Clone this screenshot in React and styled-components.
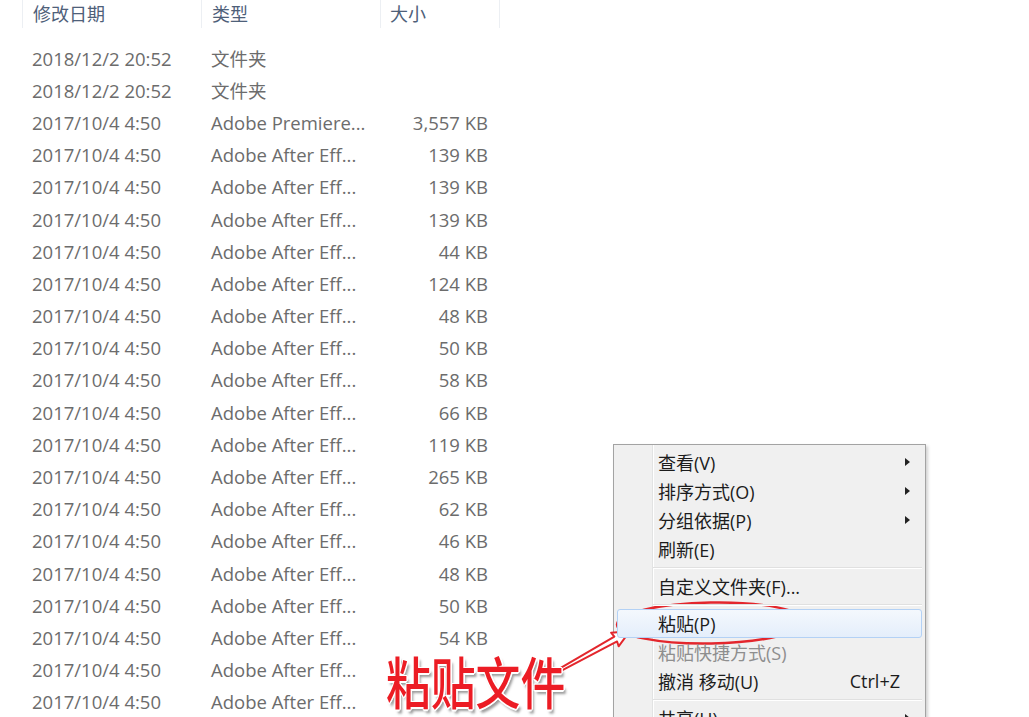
import styled, { createGlobalStyle } from "styled-components";

const Global = createGlobalStyle`
  html, body {
    margin: 0;
    padding: 0;
    background: #fff;
    overflow: hidden;
  }
  body {
    font-family: "Open Sans", "Noto Sans CJK SC", sans-serif;
  }
`;

const Page = styled.div`
  position: relative;
  width: 1029px;
  height: 717px;
  overflow: hidden;
  background: #fff;
`;

const Columns = styled.div`
  display: grid;
  grid-template-columns: 179px 179px 120px;
  margin-left: 22px;
`;

const Header = styled(Columns)`
  height: 28px;
  align-items: center;
`;

const HeadCell = styled.div`
  height: 100%;
  display: flex;
  align-items: center;
  padding-left: ${(p) => p.$pad || 10}px;
  border-left: 1px solid #eceff3;
  border-right: ${(p) => (p.$last ? "1px solid #eceff3" : "none")};
  font-size: 18px;
  color: #4e6079;
  line-height: 1;
  box-sizing: border-box;
`;

const List = styled.div`
  padding-top: 14px;
`;

const Row = styled(Columns)`
  height: 32.2px;
  align-items: center;
  font-size: 18.5px;
  color: #6c6c6c;
  white-space: nowrap;
`;

const Cell = styled.div`
  padding-left: ${(p) => (p.$right ? 0 : 10)}px;
  padding-right: ${(p) => (p.$right ? 12 : 0)}px;
  text-align: ${(p) => (p.$right ? "right" : "left")};
  overflow: hidden;
`;

const Menu = styled.div`
  position: absolute;
  left: 613px;
  top: 444px;
  width: 313px;
  height: 320px;
  box-sizing: border-box;
  border: 1px solid #a3a3a3;
  background: #f0f0f0;
  padding: 3px 3px;
  box-shadow: 2px 2px 3px rgba(0, 0, 0, 0.18);
  font-family: "Open Sans", "Noto Sans CJK SC", sans-serif;
  font-size: 18px;
  color: #1c1c1c;

  &::before {
    content: "";
    position: absolute;
    top: 0;
    bottom: 0;
    left: 38px;
    width: 1px;
    background: #e2e3e3;
    border-right: 1px solid #fff;
  }
`;

const Item = styled.div`
  position: relative;
  z-index: 1;
  height: 29px;
  box-sizing: border-box;
  display: flex;
  align-items: center;
  padding: 0 9px 2px 40px;
  color: ${(p) => (p.$disabled ? "#8e8e8e" : "#1c1c1c")};
  border: 1px solid ${(p) => (p.$active ? "#b3d1f5" : "transparent")};
  border-radius: 3px;
  background: ${(p) =>
    p.$active ? "linear-gradient(#f4f8fd, #e4eefb)" : "transparent"};
  white-space: nowrap;
`;

const Label = styled.span`
  flex: 1;
`;

const Shortcut = styled.span`
  margin-right: 12px;
`;

const SubArrow = styled.span`
  width: 0;
  height: 0;
  border-left: 5px solid #222;
  border-top: 4px solid transparent;
  border-bottom: 4px solid transparent;
  margin-right: 2px;
`;

const Separator = styled.div`
  position: relative;
  z-index: 1;
  height: 8px;
  display: flex;
  align-items: center;
  padding-left: 36px;

  &::after {
    content: "";
    flex: 1;
    height: 1px;
    background: #e0e0e0;
    border-bottom: 1px solid #fff;
  }
`;

const Overlay = styled.svg`
  position: absolute;
  left: 0;
  top: 0;
  pointer-events: none;
`;

const Note = styled.div`
  position: absolute;
  left: 386px;
  top: 652px;
  font-family: "Noto Sans CJK SC", sans-serif;
  font-size: 56px;
  font-weight: 500;
  line-height: 1;
  color: #ec1c24;
  white-space: nowrap;
  transform: scaleX(0.8);
  transform-origin: left top;
  text-shadow: 1px 1px 0 #fff, -1px -1px 0 #fff, 1px -1px 0 #fff,
    -1px 1px 0 #fff, 2px 0 0 #fff, 0 2px 0 #fff, 3px 4px 3px rgba(0, 0, 0, 0.4);
`;

const rows = [
  ["2018/12/2 20:52", "文件夹", ""],
  ["2018/12/2 20:52", "文件夹", ""],
  ["2017/10/4 4:50", "Adobe Premiere...", "3,557 KB"],
  ["2017/10/4 4:50", "Adobe After Eff...", "139 KB"],
  ["2017/10/4 4:50", "Adobe After Eff...", "139 KB"],
  ["2017/10/4 4:50", "Adobe After Eff...", "139 KB"],
  ["2017/10/4 4:50", "Adobe After Eff...", "44 KB"],
  ["2017/10/4 4:50", "Adobe After Eff...", "124 KB"],
  ["2017/10/4 4:50", "Adobe After Eff...", "48 KB"],
  ["2017/10/4 4:50", "Adobe After Eff...", "50 KB"],
  ["2017/10/4 4:50", "Adobe After Eff...", "58 KB"],
  ["2017/10/4 4:50", "Adobe After Eff...", "66 KB"],
  ["2017/10/4 4:50", "Adobe After Eff...", "119 KB"],
  ["2017/10/4 4:50", "Adobe After Eff...", "265 KB"],
  ["2017/10/4 4:50", "Adobe After Eff...", "62 KB"],
  ["2017/10/4 4:50", "Adobe After Eff...", "46 KB"],
  ["2017/10/4 4:50", "Adobe After Eff...", "48 KB"],
  ["2017/10/4 4:50", "Adobe After Eff...", "50 KB"],
  ["2017/10/4 4:50", "Adobe After Eff...", "54 KB"],
  ["2017/10/4 4:50", "Adobe After Eff...", ""],
  ["2017/10/4 4:50", "Adobe After Eff...", ""],
];

const menu = [
  { label: "查看(V)", sub: true },
  { label: "排序方式(O)", sub: true },
  { label: "分组依据(P)", sub: true },
  { label: "刷新(E)" },
  { sep: true },
  { label: "自定义文件夹(F)..." },
  { sep: true },
  { label: "粘贴(P)", active: true },
  { label: "粘贴快捷方式(S)", disabled: true },
  { label: "撤消 移动(U)", key: "Ctrl+Z" },
  { sep: true },
  { label: "共享(H)", sub: true },
];

export default function App() {
  return (
    <Page>
      <Global />
      <Header>
        <HeadCell>修改日期</HeadCell>
        <HeadCell>类型</HeadCell>
        <HeadCell $pad={9} $last>
          大小
        </HeadCell>
      </Header>
      <List>
        {rows.map((r, i) => (
          <Row key={i}>
            <Cell>{r[0]}</Cell>
            <Cell>{r[1]}</Cell>
            <Cell $right>{r[2]}</Cell>
          </Row>
        ))}
      </List>

      <Menu>
        {menu.map((m, i) =>
          m.sep ? (
            <Separator key={i} />
          ) : (
            <Item key={i} $active={m.active} $disabled={m.disabled}>
              <Label>{m.label}</Label>
              {m.key && <Shortcut>{m.key}</Shortcut>}
              {m.sub && <SubArrow />}
            </Item>
          )
        )}
      </Menu>

      <Overlay width="1029" height="717" viewBox="0 0 1029 717">
        <ellipse
          cx="711"
          cy="623"
          rx="94"
          ry="20.5"
          fill="none"
          stroke="#e3262c"
          strokeWidth="2.4"
          transform="rotate(-1 711 623)"
        />
        <g transform="translate(558 671) rotate(-29)">
          <polygon
            points="0,-1.4 66,-2.8 65,-7.8 82,0 65,7.8 66,2.8 0,1.4"
            fill="#fff"
            stroke="#e3262c"
            strokeWidth="2"
            strokeLinejoin="round"
          />
        </g>
      </Overlay>
      <Note>粘贴文件</Note>
    </Page>
  );
}
